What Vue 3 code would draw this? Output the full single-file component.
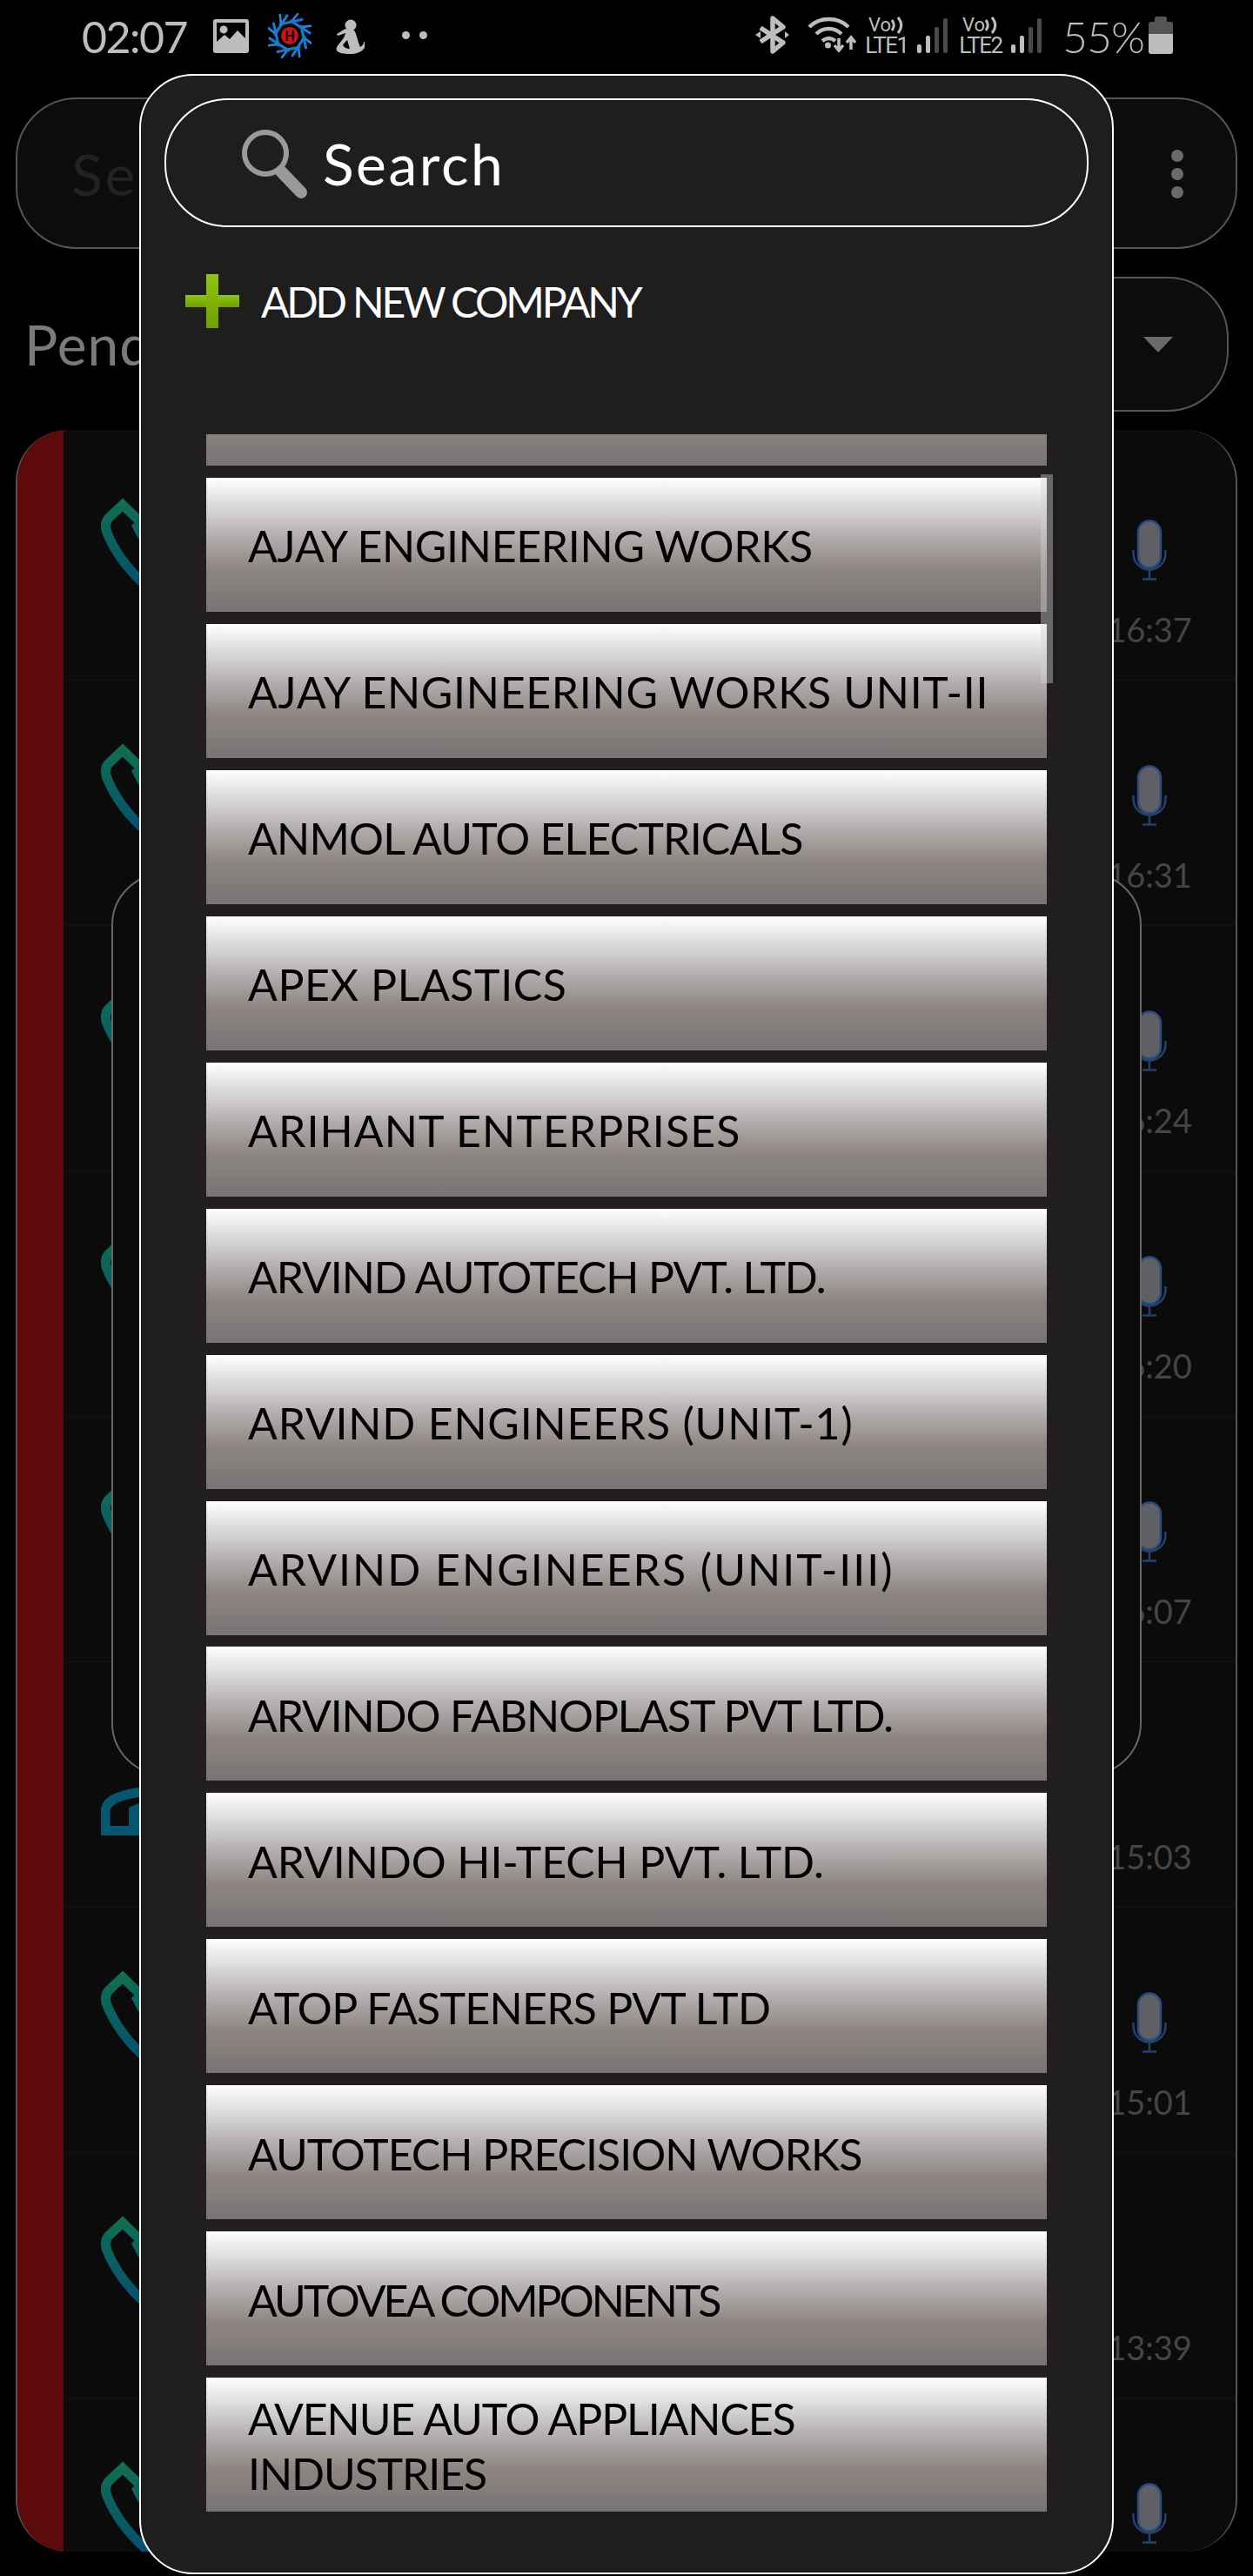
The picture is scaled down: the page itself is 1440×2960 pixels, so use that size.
<template>
  <div class="page">
    <div class="statusbar">
      <span class="clock">02:07</span>
      <svg class="ic-image" width="41" height="39" viewBox="0 0 41 39">
        <path fill="#bdbdbd" fill-rule="evenodd" d="M3 0h35a3 3 0 0 1 3 3v33a3 3 0 0 1-3 3H3a3 3 0 0 1-3-3V3a3 3 0 0 1 3-3zM4 4v22l9-8 6 5 9-10 9 9V4z"/>
        <circle cx="12" cy="12" r="4.5" fill="#bdbdbd"/>
      </svg>
      <svg class="ic-logo" width="50" height="52" viewBox="-25 -26 50 52">
        <g v-for="a in swirlArms" :key="a" :transform="`rotate(${a})`">
          <path d="M-11 -13 L14 -18.500" stroke="#1679cc" stroke-width="3.200" stroke-linecap="round"/>
          <path d="M2 -16 L9 -25" stroke="#1a8ae0" stroke-width="2.600" stroke-linecap="round"/>
        </g>
        <circle r="10" fill="#c81414"/>
        <text class="logo-h" y="6" text-anchor="middle">H</text>
      </svg>
      <svg class="ic-person" width="36" height="40" viewBox="0 0 36 40">
        <circle cx="20" cy="7" r="6.5" fill="#bdbdbd"/>
        <path fill="#bdbdbd" d="M14 11 4 17l1 2 9-3c-1 5-3 7-7 12-3 3-4 6-3 8 2 3 8 4 15 4 7 0 13-2 16-6 2-2 3-6 2-9l-2 1c0 3-2 5-4 6-2-4-3-9-4-12-1-2-1-5-3-7-3-1-7-1-10-2zM11 30c1-2 3-4 5-6l3 10c-3 0-6-1-8-4z"/>
      </svg>
      <span class="more-dots"><i></i><i></i></span>

      <div class="status-right">
        <svg class="ic-bt" width="40" height="44" viewBox="0 0 40 44">
          <path d="M6 14 32 31 20 41V3l12 10L6 30" fill="none" stroke="#bdbdbd" stroke-width="5.5" stroke-linejoin="round"/>
          <path d="M0 22l6-4v8zM39 22l-5-4v8z" fill="#bdbdbd"/>
        </svg>
        <svg class="ic-wifi" width="57" height="44" viewBox="0 0 57 44">
          <g fill="none" stroke="#bdbdbd" stroke-width="4.5">
            <path d="M2 13C14 1 35 1 47 13"/>
            <path d="M10 21c8-8 21-8 29 0"/>
            <path d="M17 29c5-4 10-4 15 0"/>
          </g>
          <circle cx="23.500" cy="34" r="3.500" fill="#bdbdbd"/>
          <path d="M36 26v13M31 34l5 6 5-6M50 39V26M45 31l5-6 5 6" fill="none" stroke="#bdbdbd" stroke-width="3.500"/>
        </svg>
        <div v-for="n in [1, 2]" :key="n" class="sim">
          <div class="sim-text">
            <div class="volte">Vo<svg width="16" height="20" viewBox="0 0 16 20"><path d="M1 4c3 4 3 8 0 12M8 1c5 6 5 12 0 18" fill="none" stroke="#bdbdbd" stroke-width="3"/></svg></div>
            <div class="lte">LTE{{ n }}</div>
          </div>
          <div class="bars">
            <i class="b1"></i><i class="b2"></i><i class="b3"></i><i class="b4"></i>
          </div>
        </div>
        <span class="pct">55%</span>
        <div class="battery"><i class="cap"></i><i class="fill"></i></div>
      </div>
    </div>

    <div class="bg-search">
      <span>Search</span>
      <div class="kebab"><i></i><i></i><i></i></div>
    </div>

    <div class="filter-row">
      <span class="pending">Pending</span>
      <div class="dropdown"><i class="caret"></i></div>
    </div>

    <div class="card">
      <div class="strip"></div>
      <div class="rows">
        <div v-for="(r, i) in rows" :key="i" class="row">
          <svg v-if="r.kind === 'shield'" class="row-ic shield" width="60" height="110" viewBox="0 0 60 110">
            <defs>
              <linearGradient :id="`teal${i}`" gradientUnits="userSpaceOnUse" x1="0" y1="0" x2="0" y2="100">
                <stop offset="0" stop-color="#10704f"/>
                <stop offset="1" stop-color="#05506f"/>
              </linearGradient>
            </defs>
            <path d="M58 40 25 8 9 23Q3 30 7 40C14 58 30 84 58 106" fill="none" :stroke="`url(#teal${i})`" stroke-width="11"/>
            <polygon points="35,32 50,17 60,60 50,60" :fill="`url(#teal${i})`"/>
          </svg>
          <svg v-else class="row-ic tab" width="60" height="60" viewBox="0 0 60 60">
            <path d="M60 5Q28 7 14 15 5 20 5 30V50.500H60" fill="none" stroke="#05566f" stroke-width="11"/>
            <path d="M32 24 60 12V50H32z" fill="#05566f"/>
          </svg>
          <div class="row-side">
            <svg class="mic" :class="{ off: !r.mic }" width="40" height="70" viewBox="0 0 40 70">
              <rect x="7" y="1.500" width="26" height="54" rx="13" fill="#5e6065" stroke="#2b4a7c" stroke-width="2.500"/>
              <path d="M1.500 35v4a18.500 18.500 0 0 0 37 0v-4M20 58v10M12 68.500h16" fill="none" stroke="#23426f" stroke-width="2.500"/>
            </svg>
            <span v-if="r.time" class="row-time">{{ r.time }}</span>
          </div>
        </div>
      </div>
    </div>

    <div class="ghost-dialog"></div>

    <div class="modal">
      <div class="search">
        <svg class="lens" width="80" height="80" viewBox="0 0 80 80">
          <circle cx="30" cy="27" r="24" fill="none" stroke="#9a9a9a" stroke-width="6"/>
          <path d="M48 48 71 72" stroke="#9a9a9a" stroke-width="14" stroke-linecap="round"/>
        </svg>
        <span>Search</span>
      </div>
      <div class="add-row">
        <span class="plus"></span>
        <span>ADD NEW COMPANY</span>
      </div>
      <div class="list">
        <div class="list-inner">
          <div
            v-for="(c, i) in companies"
            :key="i"
            class="item"
            :style="{ letterSpacing: c.ls + 'px' }"
          >{{ c.name }}</div>
        </div>
        <div class="thumb"></div>
      </div>
    </div>
  </div>
</template>

<script setup>
const swirlArms = [0, 45, 90, 135, 180, 225, 270, 315]

const rows = [
  { time: '16:37', mic: true, kind: 'shield' },
  { time: '16:31', mic: true, kind: 'shield' },
  { time: '16:24', mic: true, kind: 'shield' },
  { time: '16:20', mic: true, kind: 'shield' },
  { time: '16:07', mic: true, kind: 'shield' },
  { time: '15:03', mic: false, kind: 'tab' },
  { time: '15:01', mic: true, kind: 'shield' },
  { time: '13:39', mic: false, kind: 'shield' },
  { time: '', mic: true, kind: 'shield' }
]

// letter spacing per row, the names run wider or tighter than the stand-in font
const companies = [
  { name: '', ls: 0 },
  { name: 'AJAY ENGINEERING WORKS', ls: -0.3 },
  { name: 'AJAY ENGINEERING WORKS UNIT-II', ls: 0.7 },
  { name: 'ANMOL AUTO ELECTRICALS', ls: -0.8 },
  { name: 'APEX PLASTICS', ls: 0.6 },
  { name: 'ARIHANT ENTERPRISES', ls: 1.1 },
  { name: 'ARVIND AUTOTECH PVT. LTD.', ls: -1.1 },
  { name: 'ARVIND ENGINEERS (UNIT-1)', ls: 0.8 },
  { name: 'ARVIND ENGINEERS (UNIT-III)', ls: 2 },
  { name: 'ARVINDO FABNOPLAST PVT LTD.', ls: -1.15 },
  { name: 'ARVINDO HI-TECH PVT. LTD.', ls: -0.1 },
  { name: 'ATOP FASTENERS PVT LTD', ls: -0.7 },
  { name: 'AUTOTECH PRECISION WORKS', ls: -1 },
  { name: 'AUTOVEA COMPONENTS', ls: -3 },
  { name: 'AVENUE AUTO APPLIANCES INDUSTRIES', ls: -1.1 }
]
</script>

<style>
html,
body {
  background: #000;
}
</style>

<style scoped>
.page {
  position: relative;
  width: 1440px;
  height: 2960px;
  overflow: hidden;
  background: #000;
  font-family: Lato, "Liberation Sans", sans-serif;
}

.page i {
  display: block;
}

.statusbar {
  height: 112px;
  display: flex;
  align-items: flex-start;
  padding: 0 92px 0 94px;
  box-sizing: border-box;
  color: #bdbdbd;
}

.clock {
  margin-top: 14px;
  font-size: 50px;
  line-height: 56px;
  letter-spacing: -1.5px;
  width: 151px;
}

.ic-image {
  margin-top: 22px;
}

.ic-logo {
  margin: 15px 0 0 22px;
}

.logo-h {
  font-family: "Liberation Sans", sans-serif;
  font-size: 16px;
  font-weight: 700;
  fill: #2a0505;
}

.ic-person {
  margin: 22px 0 0 25px;
}

.more-dots {
  display: flex;
  gap: 11px;
  margin: 36px 0 0 43px;
}

.more-dots i {
  width: 9px;
  height: 9px;
  border-radius: 50%;
  background: #bdbdbd;
}

.status-right {
  margin-left: auto;
  display: flex;
  align-items: flex-start;
}

.ic-bt {
  margin-top: 18px;
}

.ic-wifi {
  margin: 18px 0 0 20px;
}

.sim {
  display: flex;
  margin-left: 7px;
  margin-top: 16px;
}

.sim + .sim {
  margin-left: 11px;
}

.sim-text {
  width: 54px;
  text-align: center;
  font-family: Roboto, sans-serif;
  color: #bdbdbd;
}

.volte {
  display: flex;
  justify-content: center;
  align-items: center;
  height: 25px;
  font-size: 22px;
  line-height: 25px;
}

.lte {
  font-size: 26px;
  line-height: 23px;
  letter-spacing: -1.500px;
  white-space: nowrap;
}

.bars {
  display: flex;
  align-items: flex-end;
  gap: 5px;
  height: 41px;
  margin: 4px 0 0 8px;
}

.bars i {
  width: 5px;
  border-radius: 2px;
}

.bars .b1 {
  height: 10px;
  background: #bdbdbd;
}

.bars .b2 {
  height: 20px;
  background: #bdbdbd;
}

.bars .b3 {
  height: 30px;
  background: #4a4a4a;
}

.bars .b4 {
  height: 40px;
  background: #4a4a4a;
}

.pct {
  margin: 14px 0 0 24px;
  font-size: 50px;
  line-height: 56px;
  font-weight: 300;
  letter-spacing: -1px;
  width: 99px;
}

.battery {
  width: 28px;
  margin-top: 19px;
  display: flex;
  flex-direction: column;
  align-items: center;
}

.battery .cap {
  width: 14px;
  height: 6px;
  background: #555;
  border-radius: 2px 2px 0 0;
}

.battery .fill {
  width: 28px;
  height: 37px;
  border-radius: 3px;
  background: linear-gradient(#555 0 14px, #bdbdbd 14px);
}

.bg-search {
  position: relative;
  height: 174px;
  margin: 0 18px;
  padding-left: 62px;
  box-sizing: border-box;
  display: flex;
  align-items: center;
  border: 2px solid #555;
  border-radius: 70px;
  background: #0c0c0c;
  color: #222;
  font-size: 66px;
  letter-spacing: 3px;
}

.kebab {
  position: absolute;
  right: 60px;
  top: 58px;
  display: flex;
  flex-direction: column;
  gap: 7px;
}

.kebab i {
  width: 14px;
  height: 14px;
  border-radius: 50%;
  background: #6a6a6a;
}

.filter-row {
  height: 155px;
  margin: 32px 28px 0 28px;
  display: flex;
  align-items: center;
  justify-content: space-between;
}

.pending {
  font-size: 64px;
  color: #7a7a7a;
  letter-spacing: 1px;
}

.dropdown {
  width: 500px;
  height: 155px;
  box-sizing: border-box;
  display: flex;
  align-items: center;
  justify-content: flex-end;
  padding-right: 62px;
  border: 2px solid #555;
  border-radius: 70px;
  background: #0c0c0c;
}

.caret {
  width: 0;
  height: 0;
  border-left: 17px solid transparent;
  border-right: 17px solid transparent;
  border-top: 18px solid #6a6a6a;
}

.card {
  position: relative;
  height: 2438px;
  margin: 21px 18px 0;
  display: flex;
  box-sizing: border-box;
  overflow: hidden;
  border-left: 2px solid #555;
  border-right: 2px solid #555;
  border-radius: 60px;
  background: #0b0b0b;
}

.strip {
  width: 53px;
  flex: none;
  background: #5c0a0a;
}

.rows {
  flex: 1;
  padding-top: 6px;
}

.row {
  position: relative;
  height: 282px;
  box-sizing: border-box;
  display: flex;
  justify-content: space-between;
  border-bottom: 1px solid #121212;
}

.row-ic {
  margin-left: 43px;
}

.shield {
  margin-top: 72px;
}

.tab {
  margin-top: 143px;
}

.row-side {
  width: 90px;
  margin-right: 54px;
  padding-top: 97px;
  display: flex;
  flex-direction: column;
  align-items: center;
}

.mic.off {
  visibility: hidden;
}

.row-time {
  margin-top: 33px;
  font-size: 38px;
  line-height: 46px;
  color: #454545;
  white-space: nowrap;
}

.ghost-dialog {
  position: absolute;
  left: 128px;
  top: 1003px;
  width: 1184px;
  height: 1037px;
  box-sizing: border-box;
  border: 2px solid #666;
  border-radius: 60px;
  background: #0b0b0b;
}

.modal {
  position: absolute;
  left: 160px;
  top: 85px;
  width: 1120px;
  height: 2873px;
  box-sizing: border-box;
  padding: 26px 27px 0;
  border: 2px solid #fff;
  border-radius: 62px;
  background: #1e1e1e;
}

.search {
  height: 148px;
  box-sizing: border-box;
  display: flex;
  align-items: center;
  padding-left: 84px;
  border: 2px solid #fff;
  border-radius: 72px;
  color: #fff;
  font-size: 66px;
  letter-spacing: 2.500px;
}

.lens {
  margin-right: 16px;
  margin-top: 3px;
}

.add-row {
  height: 62px;
  margin: 54px 0 0 24px;
  display: flex;
  align-items: center;
  gap: 25px;
  color: #fff;
  font-size: 48px;
  letter-spacing: -3.200px;
}

.plus {
  position: relative;
  width: 62px;
  height: 62px;
  flex: none;
  background:
    linear-gradient(#8fc70c, #6f9f00) center / 14px 100% no-repeat,
    linear-gradient(#8fc70c, #6f9f00) center / 100% 14px no-repeat;
}

.list {
  position: relative;
  width: 980px;
  height: 2387px;
  margin: 122px 0 0 41px;
  padding: 0 7px;
  box-sizing: border-box;
  overflow: hidden;
  background: #231e1e;
}

.list-inner {
  margin-top: -118px;
  display: flex;
  flex-direction: column;
  gap: 13.950px;
}

.item {
  height: 154px;
  flex: none;
  box-sizing: border-box;
  display: flex;
  align-items: center;
  padding: 4px 48px 0;
  color: #000;
  font-size: 50px;
  line-height: 63px;
  background: linear-gradient(#fff 0%, #e0dedf 18%, #b5b1b0 42%, #8d8584 68%, #787473 100%);
}

.thumb {
  position: absolute;
  right: 0;
  top: 46px;
  width: 14px;
  height: 240px;
  background: rgba(215, 212, 210, 0.4);
}
</style>
